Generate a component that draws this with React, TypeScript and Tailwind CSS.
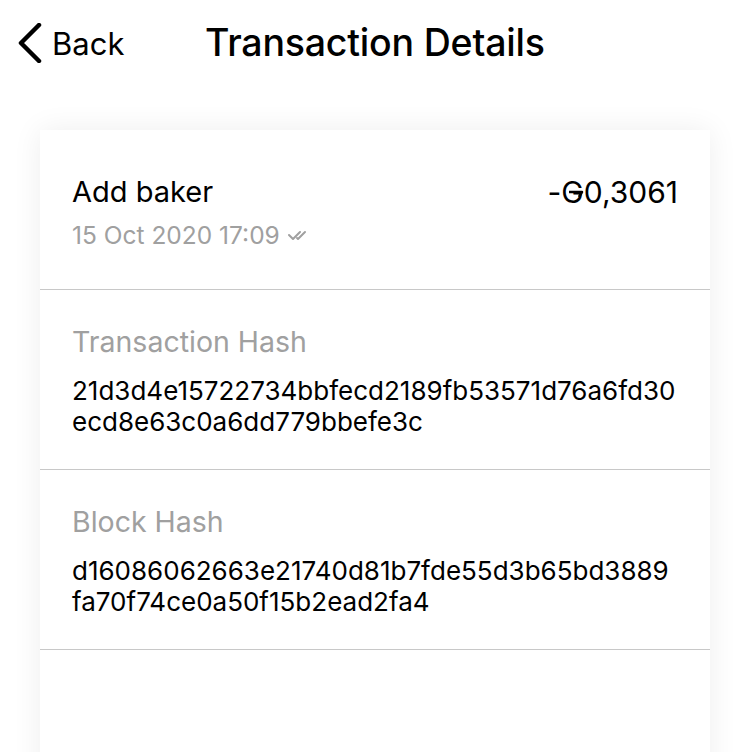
import React from 'react';

const font = { fontFamily: 'Inter, "Noto Sans", sans-serif' };

interface HashSectionProps {
  label: string;
  lines: string[];
}

const HashSection: React.FC<HashSectionProps> = ({ label, lines }) => (
  <div className="h-[180px] border-b border-[#c8c8c8] px-8 pt-[34px]">
    <div className="text-[28.5px] leading-[36px] text-[#a0a0a0]">{label}</div>
    <div className="mt-[15px] text-[26px] leading-[31px] text-black">
      {lines.map((line) => (
        <div key={line}>{line}</div>
      ))}
    </div>
  </div>
);

export default function App() {
  return (
    <div className="w-[750px] h-[752px] overflow-hidden bg-white" style={font}>
      {/* Barra superior */}
      <div className="flex items-center h-[86px]">
        <div className="flex items-center pl-[16px] w-[205px]">
          <svg width="28" height="40" viewBox="0 0 28 40" fill="none">
            <path d="M23 2 L5 20 L23 38" stroke="black" strokeWidth="4.5" strokeLinecap="round" strokeLinejoin="round" />
          </svg>
          <span className="ml-[8px] text-[31px] leading-none text-black">Back</span>
        </div>
        <h1 className="text-[37.5px] leading-none font-medium text-black tracking-[-0.2px]">Transaction Details</h1>
      </div>

      <div className="px-10 pt-[44px]">
        <div className="bg-white h-[700px] shadow-[0_0_28px_rgba(0,0,0,0.07)]">
          {/* Resumen */}
          <div className="h-[160px] border-b border-[#c8c8c8] px-8 pt-[44px]">
            <div className="flex items-center justify-between">
              <span className="text-[29px] leading-[36px] text-black">Add baker</span>
              <span className="text-[30px] leading-[36px] text-black flex items-center">
                -
                <span className="relative inline-block">
                  G
                  <svg className="absolute left-[8px] top-[15px]" width="16" height="10" viewBox="0 0 16 10" fill="none">
                    <path d="M0 3 L13 3 L10 8" stroke="black" strokeWidth="2.5" strokeLinejoin="round" />
                  </svg>
                </span>
                0,3061
              </span>
            </div>
            <div className="mt-[10px] flex items-center text-[24.5px] leading-[30px] text-[#a0a0a0]">
              <span>15 Oct 2020 17:09</span>
              <svg className="ml-[8px]" width="22" height="12" viewBox="0 0 22 12" fill="none">
                <path d="M1 6 L5 10 L12 3" stroke="#a0a0a0" strokeWidth="2" strokeLinecap="round" strokeLinejoin="round" />
                <path d="M9 9 L10 10 L17 3" stroke="#a0a0a0" strokeWidth="2" strokeLinecap="round" strokeLinejoin="round" />
              </svg>
            </div>
          </div>

          <HashSection
            label="Transaction Hash"
            lines={['21d3d4e15722734bbfecd2189fb53571d76a6fd30', 'ecd8e63c0a6dd779bbefe3c']}
          />
          <HashSection
            label="Block Hash"
            lines={['d16086062663e21740d81b7fde55d3b65bd3889', 'fa70f74ce0a50f15b2ead2fa4']}
          />
        </div>
      </div>
    </div>
  );
}
